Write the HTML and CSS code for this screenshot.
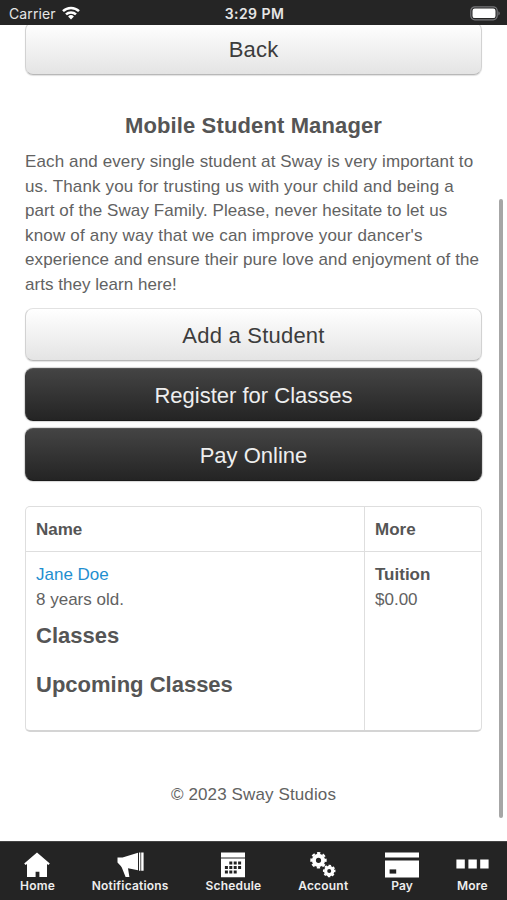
FILE: index.html
```html
<!DOCTYPE html>
<html lang="en">
<head>
    <meta charset="UTF-8">
    <meta name="viewport" content="width=device-width, initial-scale=1.0">
    <title>Sway Studios - Mobile Student Manager</title>
    <link rel="stylesheet" href="styles.css">
</head>
<body>
    <header class="status-bar">
        <div class="status-left">
            <span class="carrier">Carrier</span>
            <svg class="wifi" width="18" height="14" viewBox="0 0 18 14" fill="none" stroke="#fff" stroke-width="2.5">
                <path d="M1 5.2a11.4 11.4 0 0 1 16 0"/>
                <path d="M4 8.4a7.2 7.2 0 0 1 10 0"/>
                <path d="M9 13.4l-2.9-3a4.1 4.1 0 0 1 5.8 0z" fill="#fff" stroke="none"/>
            </svg>
        </div>
        <div class="status-time">3:29 PM</div>
        <div class="status-right">
            <svg width="30" height="15" viewBox="0 0 30 15">
                <rect x=".8" y=".8" width="26.4" height="13" rx="4" fill="none" stroke="#77777a" stroke-width="1.2"/>
                <rect x="2.5" y="2.5" width="23" height="9.6" rx="2.2" fill="#fff"/>
                <path d="M28.4 5.2c1.8.8 1.8 3.4 0 4.2z" fill="#77777a"/>
            </svg>
        </div>
    </header>

    <main class="content">
        <button class="btn btn-light btn-back" type="button">Back</button>

        <h1 class="title">Mobile Student Manager</h1>
        <p class="intro">
            <span class="l1">Each and every single student at Sway is very important to</span><br>
            <span class="l2">us. Thank you for trusting us with your child and being a</span><br>
            <span class="l3">part of the Sway Family. Please, never hesitate to let us</span><br>
            <span class="l4">know of any way that we can improve your dancer's</span><br>
            <span class="l5">experience and ensure their pure love and enjoyment of the</span><br>
            <span class="l6">arts they learn here!</span>
        </p>

        <div class="actions">
            <button class="btn btn-light btn-add" type="button">Add a Student</button>
            <button class="btn btn-dark" type="button">Register for Classes</button>
            <button class="btn btn-dark" type="button">Pay Online</button>
        </div>

        <div class="students">
            <div class="cell head">Name</div>
            <div class="cell head">More</div>
            <div class="cell">
                <a class="student-link" href="#">Jane Doe</a>
                <div>8 years old.</div>
                <h2>Classes</h2>
                <h2>Upcoming Classes</h2>
            </div>
            <div class="cell">
                <strong>Tuition</strong>
                <div>$0.00</div>
            </div>
        </div>

        <footer class="copyright">© 2023 Sway Studios</footer>
        <div class="scrollbar"></div>
    </main>

    <nav class="tab-bar">
        <a class="tab" href="#">
            <svg width="26" height="26" viewBox="0 0 26 26" fill="#fff">
                <path d="M13 .6L25.8 11.4l-1.4 1.6-1.4-1v13h-7.6v-5.2h-3.8V25H3V12l-1.4 1L.2 11.4z"/>
            </svg>
            <span>Home</span>
        </a>
        <a class="tab" href="#">
            <svg width="27" height="26" viewBox="0 0 27 26" fill="#fff">
                <path d="M.5 5.6h5L21 .8v17.4l-10-2L12.4 25H8.6L4.8 15.4 3.8 14 .5 10.6z"/>
                <path d="M22 .4h1.4v18.4H22zM24.2.4h2.4v18.4h-2.4z"/>
            </svg>
            <span>Notifications</span>
        </a>
        <a class="tab" href="#">
            <svg width="24" height="26" viewBox="0 0 24 26">
                <path d="M0 .4h24v5H0zM0 6.6h24v18.6H0z" fill="#fff"/>
                <path d="M8.3 9.6h3v3h-3zM12.7 9.6h3v3h-3zM17.1 9.6h3v3h-3zM3.9 14h3v3h-3zM8.3 14h3v3h-3zM12.7 14h3v3h-3zM17.1 14h3v3h-3zM3.9 18.4h3v3h-3zM8.3 18.4h3v3h-3zM12.7 18.4h3v3h-3z" fill="#222"/>
            </svg>
            <span>Schedule</span>
        </a>
        <a class="tab" href="#">
            <svg width="26" height="26" viewBox="0 0 26 26" fill="none" stroke="#fff">
                <circle cx="8.5" cy="8.3" r="4.6" stroke-width="4"/>
                <circle cx="8.5" cy="8.3" r="7.2" stroke-width="2" stroke-dasharray="3.2 2.455" transform="rotate(-13 8.5 8.3)"/>
                <circle cx="19.2" cy="19" r="3.6" stroke-width="3.2"/>
                <circle cx="19.2" cy="19" r="5.5" stroke-width="1.6" stroke-dasharray="2.4 1.92" transform="rotate(-13 19.2 19)"/>
            </svg>
            <span>Account</span>
        </a>
        <a class="tab" href="#">
            <svg width="34" height="26" viewBox="0 0 34 26">
                <path d="M0 .4h34v5H0zM0 8.4h34v17H0z" fill="#fff"/>
                <path d="M4.6 17.4h6.6v4.2H4.6z" fill="#222"/>
            </svg>
            <span>Pay</span>
        </a>
        <a class="tab" href="#">
            <svg width="33" height="26" viewBox="0 0 33 26" fill="#fff">
                <path d="M.4 7.6h8.4v8.8H.4zM12.4 7.6h8.4v8.8h-8.4zM24.2 7.6h8.4v8.8h-8.4z"/>
            </svg>
            <span>More</span>
        </a>
    </nav>
</body>
</html>
```

FILE: styles.css
```css
* {
    margin: 0;
    padding: 0;
    box-sizing: border-box;
}

body {
    display: flex;
    flex-direction: column;
    height: 900px;
    overflow: hidden;
    background-color: #fff;
    color: #626262;
    font-family: "Liberation Sans", Arial, sans-serif;
    font-size: 17px;
    line-height: 24.5px;
}

a {
    text-decoration: none;
}

h1,
h2,
strong {
    color: #555;
}

/* status bar */
.status-bar {
    display: grid;
    grid-template-columns: 1fr auto 1fr;
    align-items: center;
    flex: none;
    height: 25px;
    padding: 2px 7px 0 9px;
    background-color: #252525;
    color: #e6e6e6;
    font-family: Inter, "Liberation Sans", sans-serif;
    font-size: 14px;
    line-height: 20px;
    position: relative;
    z-index: 1;
}

.status-left {
    display: flex;
    align-items: center;
    gap: 6px;
}

.carrier {
    letter-spacing: 0.1px;
}

.wifi {
    margin-top: -2px;
}

.status-time {
    font-weight: 600;
    letter-spacing: 0.45px;
}

.status-right {
    display: flex;
    justify-content: flex-end;
}

/* page */
.content {
    position: relative;
    flex: 1;
    min-height: 0;
    overflow: hidden;
    padding: 0 25px;
}

.btn {
    display: block;
    width: 100%;
    height: 53px;
    padding-top: 2px;
    border: 1px solid;
    border-radius: 8px;
    font-family: inherit;
    font-size: 22px;
    line-height: 50px;
    text-align: center;
}

.btn-light {
    border-color: #e2e2e2 #d2d2d2 #b8b8b8;
    background: linear-gradient(#fff, #e4e4e4);
    box-shadow: 0 1px 1px rgba(0, 0, 0, 0.12);
    color: #3c3c3c;
}

.btn-dark {
    border-color: #555 #3a3a3a #1a1a1a;
    background: linear-gradient(#444, #242424);
    box-shadow: 0 0 1px 1px rgba(0, 0, 0, 0.16);
    color: #eee;
}

.btn-back {
    margin-top: -3px;
    letter-spacing: 0.2px;
}

.btn-add {
    letter-spacing: 0.22px;
}

.title {
    margin-top: 37px;
    font-size: 22px;
    line-height: 28px;
    letter-spacing: 0.13px;
    text-align: center;
}

.intro {
    margin-top: 10px;
    white-space: nowrap;
}

.l1 { letter-spacing: 0.12px; }
.l2 { letter-spacing: 0.15px; }
.l3 { letter-spacing: 0.07px; }
.l4 { letter-spacing: 0.18px; }
.l5 { letter-spacing: 0.09px; }
.l6 { letter-spacing: 0.03px; }

.actions {
    display: grid;
    gap: 7px;
    margin-top: 11px;
}

.students {
    display: grid;
    grid-template-columns: 339px 1fr;
    grid-template-rows: 45px 178px;
    margin-top: 25px;
    border: 1px solid #dedede;
    border-bottom: 2px solid #d4d4d4;
    border-radius: 5px;
}

.cell {
    padding: 11px 10px 0;
}

.cell:nth-child(odd) {
    border-right: 1px solid #dedede;
}

.head {
    border-bottom: 1px solid #dedede;
    color: #555;
    font-weight: bold;
}

.cell h2 {
    margin-top: 10px;
    margin-bottom: 21px;
    font-size: 22px;
    line-height: 28px;
}

.cell h2 + h2 {
    margin-top: 0;
}

.student-link {
    color: #1f8fd0;
}

.copyright {
    margin-top: 51px;
    letter-spacing: 0.12px;
    text-align: center;
}

.scrollbar {
    position: absolute;
    top: 174px;
    right: 4px;
    width: 4px;
    height: 619px;
    border-radius: 2px;
    background-color: #a6a6a6;
}

/* bottom tabs */
.tab-bar {
    display: flex;
    justify-content: space-between;
    flex: none;
    height: 59px;
    padding: 10px 18px 0 20px;
    border-top: 1px solid #444;
    background-color: #242424;
}

.tab {
    display: flex;
    flex-direction: column;
    align-items: center;
    color: #eee;
    font-family: Inter, "Liberation Sans", sans-serif;
    font-size: 12px;
    font-weight: 600;
    line-height: 16px;
    letter-spacing: 0.2px;
}
```
